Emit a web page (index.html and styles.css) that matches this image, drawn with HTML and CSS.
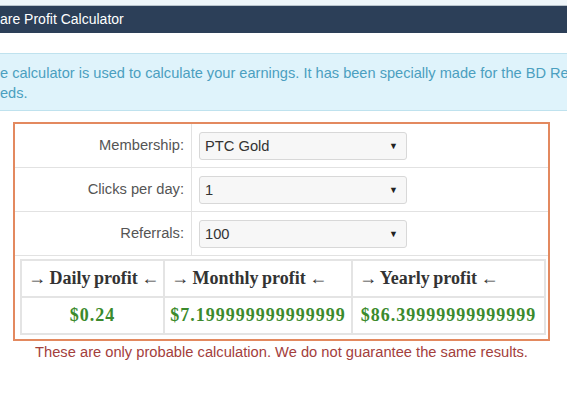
FILE: index.html
```
<!DOCTYPE html>
<html>
<head>
<meta charset="utf-8">
<link rel="stylesheet" href="styles.css">
</head>
<body>
<div class="topstrip"></div>
<div class="header">are Profit Calculator</div>
<div class="alert">
  <div class="alert-line">e calculator is used to calculate your earnings. It has been specially made for the BD Re</div>
  <div class="alert-line">eds.</div>
</div>
<div class="calc">
  <div class="form-row">
    <div class="label">Membership:</div>
    <div class="field"><div class="select"><span>PTC Gold</span><span class="caret">▼</span></div></div>
  </div>
  <div class="form-row">
    <div class="label">Clicks per day:</div>
    <div class="field"><div class="select"><span>1</span><span class="caret">▼</span></div></div>
  </div>
  <div class="form-row">
    <div class="label">Referrals:</div>
    <div class="field"><div class="select"><span>100</span><span class="caret">▼</span></div></div>
  </div>
  <table class="results">
    <colgroup>
      <col class="c1"><col class="c2"><col class="c3">
    </colgroup>
    <tr>
      <th>→ Daily profit ←</th>
      <th>→ Monthly profit ←</th>
      <th>→ Yearly profit ←</th>
    </tr>
    <tr>
      <td>$0.24</td>
      <td>$7.199999999999999</td>
      <td>$86.39999999999999</td>
    </tr>
  </table>
</div>
<div class="note">These are only probable calculation. We do not guarantee the same results.</div>
</body>
</html>
```
FILE: styles.css
```
html, body {
  margin: 0;
  padding: 0;
  background: #ffffff;
  overflow: hidden;
  font-family: "Liberation Sans", Arial, sans-serif;
}
.topstrip {
  height: 5px;
  background: #eef5f9;
  border-bottom: 1px solid #b9c4cc;
}
.header {
  height: 27px;
  line-height: 26px;
  background: #2c3f58;
  color: #ffffff;
  font-size: 14px;
  white-space: nowrap;
}
.alert {
  margin-top: 20px;
  background: #dff3fb;
  border-top: 1px solid #bfe2ee;
  border-bottom: 1px solid #bfe2ee;
  padding: 9px 0 7px 0;
  color: #4b9fc0;
  font-size: 14.6px;
  line-height: 20px;
}
.alert-line {
  white-space: nowrap;
  overflow: hidden;
}
.calc {
  margin: 11px 0 0 13px;
  width: 533px;
  border: 2px solid #e3895f;
  padding-bottom: 4px;
}
.form-row {
  display: flex;
  height: 43px;
  border-bottom: 1px solid #e2e2e2;
}
.label {
  width: 169px;
  padding-right: 7px;
  border-right: 1px solid #e2e2e2;
  text-align: right;
  line-height: 43px;
  font-size: 14.7px;
  color: #555555;
}
.field {
  padding-left: 7px;
  display: flex;
  align-items: center;
}
.select {
  width: 193px;
  height: 26px;
  border: 1px solid #d8d8d8;
  border-radius: 3px;
  background: #f7f7f7;
  display: flex;
  align-items: center;
  justify-content: space-between;
  padding: 0 8px 0 5px;
  font-size: 14.7px;
  color: #333333;
}
.caret {
  font-size: 9px;
  color: #222;
}
.results {
  margin: 3px 0 0 5px;
  width: 524px;
  table-layout: fixed;
  border-collapse: collapse;
  font-family: "Liberation Serif", "DejaVu Serif", serif;
  font-weight: bold;
}
.c1 { width: 143px; }
.c2 { width: 188px; }
.c3 { width: 193px; }
.results th, .results td {
  border: 2px solid #e4e4e4;
  height: 35px;
  padding-top: 0;
  padding-bottom: 0;
  white-space: nowrap;
}
.results th {
  text-align: left;
  padding-left: 6px;
  font-size: 18px;
  color: #333333;
  word-spacing: -1px;
}
.results td {
  text-align: center;
  font-size: 18px;
  color: #3b8a2c;
  letter-spacing: 1px;
  padding-left: 0;
  padding-right: 0;
}
.note {
  width: 537px;
  margin-left: 13px;
  text-align: center;
  color: #a3403c;
  font-size: 14.7px;
  line-height: 20px;
  margin-top: 1px;
}
```
